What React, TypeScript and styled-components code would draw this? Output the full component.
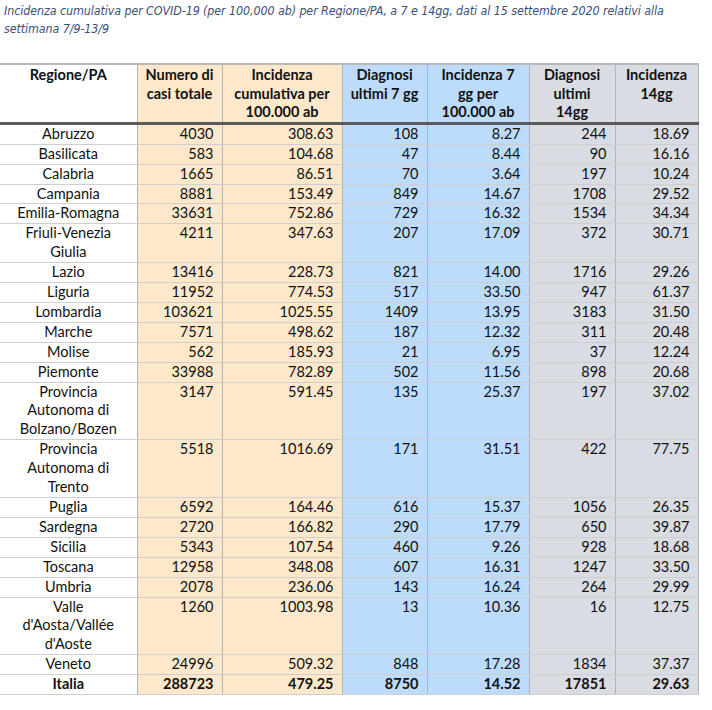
import React from "react";
import styled, { createGlobalStyle } from "styled-components";

type Tone = "plain" | "orange" | "blue" | "grey";

interface Row {
  region: string;
  values: string[];
  total?: boolean;
}

const TONES: Record<Tone, string> = {
  plain: "#ffffff",
  orange: "#fde8cb",
  blue: "#bddcfb",
  grey: "#d9dce3",
};

const COLUMNS: { title: string; width: number; tone: Tone }[] = [
  { title: "Regione/PA", width: 137, tone: "plain" },
  { title: "Numero di\ncasi totale", width: 85, tone: "orange" },
  { title: "Incidenza\ncumulativa per\n100.000 ab", width: 120, tone: "orange" },
  { title: "Diagnosi\nultimi 7 gg", width: 85, tone: "blue" },
  { title: "Incidenza 7\ngg per\n100.000 ab", width: 102, tone: "blue" },
  { title: "Diagnosi\nultimi\n14gg", width: 86, tone: "grey" },
  { title: "Incidenza\n14gg", width: 83, tone: "grey" },
];

const ROWS: Row[] = [
  { region: "Abruzzo", values: ["4030", "308.63", "108", "8.27", "244", "18.69"] },
  { region: "Basilicata", values: ["583", "104.68", "47", "8.44", "90", "16.16"] },
  { region: "Calabria", values: ["1665", "86.51", "70", "3.64", "197", "10.24"] },
  { region: "Campania", values: ["8881", "153.49", "849", "14.67", "1708", "29.52"] },
  { region: "Emilia-Romagna", values: ["33631", "752.86", "729", "16.32", "1534", "34.34"] },
  { region: "Friuli-Venezia\nGiulia", values: ["4211", "347.63", "207", "17.09", "372", "30.71"] },
  { region: "Lazio", values: ["13416", "228.73", "821", "14.00", "1716", "29.26"] },
  { region: "Liguria", values: ["11952", "774.53", "517", "33.50", "947", "61.37"] },
  { region: "Lombardia", values: ["103621", "1025.55", "1409", "13.95", "3183", "31.50"] },
  { region: "Marche", values: ["7571", "498.62", "187", "12.32", "311", "20.48"] },
  { region: "Molise", values: ["562", "185.93", "21", "6.95", "37", "12.24"] },
  { region: "Piemonte", values: ["33988", "782.89", "502", "11.56", "898", "20.68"] },
  {
    region: "Provincia\nAutonoma di\nBolzano/Bozen",
    values: ["3147", "591.45", "135", "25.37", "197", "37.02"],
  },
  {
    region: "Provincia\nAutonoma di\nTrento",
    values: ["5518", "1016.69", "171", "31.51", "422", "77.75"],
  },
  { region: "Puglia", values: ["6592", "164.46", "616", "15.37", "1056", "26.35"] },
  { region: "Sardegna", values: ["2720", "166.82", "290", "17.79", "650", "39.87"] },
  { region: "Sicilia", values: ["5343", "107.54", "460", "9.26", "928", "18.68"] },
  { region: "Toscana", values: ["12958", "348.08", "607", "16.31", "1247", "33.50"] },
  { region: "Umbria", values: ["2078", "236.06", "143", "16.24", "264", "29.99"] },
  {
    region: "Valle\nd'Aosta/Vallée\nd'Aoste",
    values: ["1260", "1003.98", "13", "10.36", "16", "12.75"],
  },
  { region: "Veneto", values: ["24996", "509.32", "848", "17.28", "1834", "37.37"] },
  {
    region: "Italia",
    values: ["288723", "479.25", "8750", "14.52", "17851", "29.63"],
    total: true,
  },
];

const GlobalStyle = createGlobalStyle`
  body {
    margin: 0;
    background: #ffffff;
    font-family: Lato, "Open Sans", sans-serif;
  }
`;

const Page = styled.div`
  width: 712px;
  height: 710px;
  overflow: hidden;
`;

const Caption = styled.p`
  margin: 0;
  padding: 2px 0 0 4px;
  font-family: "DejaVu Sans Condensed", "DejaVu Sans", sans-serif;
  font-style: italic;
  font-size: 12.4px;
  line-height: 18px;
  color: #3a5079;
  white-space: nowrap;
  letter-spacing: -0.09px;
`;

const Table = styled.table`
  margin-top: 25px;
  width: 698px;
  table-layout: fixed;
  border-collapse: collapse;
  color: #111111;
  font-size: 14.5px;
`;

const HeadCell = styled.th<{ $tone: Tone }>`
  background: ${(p) => TONES[p.$tone]};
  border-top: 2px solid #b9b9b9;
  border-bottom: 3px solid #5a5a5a;
  border-left: 1px solid #b3b3b3;
  border-right: 1px solid #b3b3b3;
  padding: 1px 2px 0;
  height: 53px;
  line-height: 18.6px;
  font-weight: 700;
  text-align: center;
  vertical-align: top;
  white-space: pre-line;

  &:first-child {
    border-left: none;
  }
`;

const RegionCell = styled.td<{ $total?: boolean }>`
  border-bottom: 1px solid #cfcfcf;
  border-right: 1px solid #b3b3b3;
  padding: 0 2px;
  line-height: 18.9px;
  text-align: center;
  vertical-align: top;
  white-space: pre-line;
  font-weight: ${(p) => (p.$total ? 700 : 400)};
`;

const ValueCell = styled.td<{ $tone: Tone; $total?: boolean }>`
  background: ${(p) => TONES[p.$tone]};
  border-bottom: 1px solid #cfcfcf;
  border-right: 1px solid #b3b3b3;
  padding: 0 8px 0 0;
  line-height: 18.9px;
  text-align: right;
  vertical-align: top;
  font-weight: ${(p) => (p.$total ? 700 : 400)};
`;

const App = () => {
  return (
    <Page>
      <GlobalStyle />
      <Caption>
        Incidenza cumulativa per COVID-19 (per 100,000 ab) per Regione/PA, a 7 e 14gg, dati al 15
        settembre 2020 relativi alla
        <br />
        settimana 7/9-13/9
      </Caption>
      <Table>
        <colgroup>
          {COLUMNS.map((col) => (
            <col key={col.title} style={{ width: col.width }} />
          ))}
        </colgroup>
        <thead>
          <tr>
            {COLUMNS.map((col) => (
              <HeadCell key={col.title} $tone={col.tone}>
                {col.title}
              </HeadCell>
            ))}
          </tr>
        </thead>
        <tbody>
          {ROWS.map((row) => (
            <tr key={row.region}>
              <RegionCell $total={row.total}>{row.region}</RegionCell>
              {row.values.map((value, i) => (
                <ValueCell key={i} $tone={COLUMNS[i + 1].tone} $total={row.total}>
                  {value}
                </ValueCell>
              ))}
            </tr>
          ))}
        </tbody>
      </Table>
    </Page>
  );
};

export default App;
